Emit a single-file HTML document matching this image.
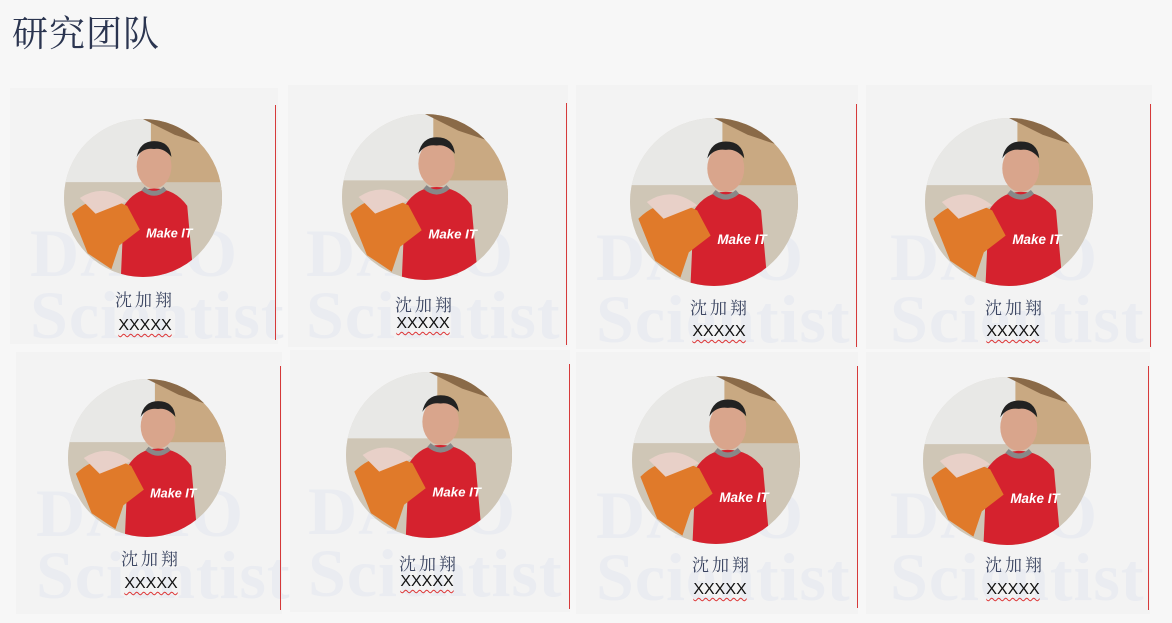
<!DOCTYPE html>
<html><head><meta charset="utf-8"><style>
body{margin:0;width:1172px;height:623px;background:#f7f7f7;position:relative;overflow:hidden;font-family:"Liberation Serif","Noto Serif CJK SC",serif}
.t{position:absolute;left:12px;top:6px;font-size:36px;color:#2b3550;letter-spacing:1px;font-family:"Noto Serif CJK SC",serif}
.card{position:absolute;background:#f3f3f3}
.wm{position:absolute;font-family:"Liberation Serif",serif;font-weight:bold;color:#eaecf1;font-size:68px;line-height:62px;white-space:nowrap;letter-spacing:1px}
.rl{position:absolute;width:1px;background:#d63a3a}
.nm{position:absolute;font-size:17px;color:#3a4460;letter-spacing:3px;transform:translateX(-50%);font-family:"Noto Serif CJK SC",serif;line-height:20px}
.xx{position:absolute;font-family:"Liberation Sans",sans-serif;font-size:16px;color:#111;transform:translateX(-50%);text-decoration:underline wavy #d33;text-underline-offset:3px;text-decoration-thickness:1px}
svg.p{position:absolute}
</style></head><body>
<div class="t">研究团队</div>
<svg width="0" height="0" style="position:absolute"><defs>
<clipPath id="c"><circle cx="50" cy="50" r="50"/></clipPath>
<g id="ph"><g clip-path="url(#c)">
<rect width="100" height="100" fill="#d9d3c8"/>
<rect x="0" y="0" width="60" height="40" fill="#e8e8e6"/>
<rect x="55" y="0" width="45" height="60" fill="#c9a982"/>
<polygon points="50,0 100,0 100,20 70,10" fill="#8a6a48"/>
<rect x="0" y="40" width="100" height="60" fill="#cfc6b6"/>
<ellipse cx="57" cy="30" rx="11" ry="14" fill="#d9a58c"/>
<path d="M46 24 Q48 14 57 14 Q67 14 68 24 Q63 18 57 19 Q50 18 46 24Z" fill="#222"/>
<path d="M36 100 L38 55 Q45 44 57 44 Q70 44 78 55 L82 100Z" fill="#d5222e"/>
<path d="M50 44 Q57 50 64 44" stroke="#888" stroke-width="3" fill="none"/>
<path d="M5 60 Q20 45 40 55 L48 70 L35 80 L30 95 L15 85 Z" fill="#e07a2a"/>
<path d="M10 50 Q25 40 40 52 L20 60Z" fill="#e8d0c8"/>
<text x="52" y="75" font-size="8" fill="#fff" font-family="Liberation Sans" font-style="italic" font-weight="bold">Make IT</text>
</g></g></defs></svg>
<div class="card" style="left:10px;top:88px;width:268px;height:256px"></div>
<div class="card" style="left:288px;top:85px;width:280px;height:262px"></div>
<div class="card" style="left:576px;top:85px;width:282px;height:264px"></div>
<div class="card" style="left:866px;top:85px;width:286px;height:264px"></div>
<div class="card" style="left:16px;top:352px;width:266px;height:262px"></div>
<div class="card" style="left:290px;top:350px;width:280px;height:262px"></div>
<div class="card" style="left:576px;top:352px;width:282px;height:262px"></div>
<div class="card" style="left:866px;top:352px;width:284px;height:262px"></div>
<div class="wm" style="left:30px;top:222px">DAHO<br>Scientist</div>
<div class="wm" style="left:306px;top:222px">DAHO<br>Scientist</div>
<div class="wm" style="left:596px;top:226px">DAHO<br>Scientist</div>
<div class="wm" style="left:890px;top:226px">DAHO<br>Scientist</div>
<div class="wm" style="left:36px;top:482px">DAHO<br>Scientist</div>
<div class="wm" style="left:308px;top:480px">DAHO<br>Scientist</div>
<div class="wm" style="left:596px;top:484px">DAHO<br>Scientist</div>
<div class="wm" style="left:890px;top:484px">DAHO<br>Scientist</div>
<div class="rl" style="left:275px;top:105px;height:235px"></div>
<div class="rl" style="left:566px;top:103px;height:242px"></div>
<div class="rl" style="left:856px;top:104px;height:243px"></div>
<div class="rl" style="left:1150px;top:104px;height:243px"></div>
<div class="rl" style="left:280px;top:366px;height:244px"></div>
<div class="rl" style="left:569px;top:364px;height:245px"></div>
<div class="rl" style="left:857px;top:366px;height:242px"></div>
<div class="rl" style="left:1148px;top:366px;height:244px"></div>
<svg class="p" style="left:64px;top:119px" width="158" height="158" viewBox="0 0 100 100"><use href="#ph"/></svg>
<svg class="p" style="left:342px;top:114px" width="166" height="166" viewBox="0 0 100 100"><use href="#ph"/></svg>
<svg class="p" style="left:630px;top:118px" width="168" height="168" viewBox="0 0 100 100"><use href="#ph"/></svg>
<svg class="p" style="left:925px;top:118px" width="168" height="168" viewBox="0 0 100 100"><use href="#ph"/></svg>
<svg class="p" style="left:68px;top:379px" width="158" height="158" viewBox="0 0 100 100"><use href="#ph"/></svg>
<svg class="p" style="left:346px;top:372px" width="166" height="166" viewBox="0 0 100 100"><use href="#ph"/></svg>
<svg class="p" style="left:632px;top:376px" width="168" height="168" viewBox="0 0 100 100"><use href="#ph"/></svg>
<svg class="p" style="left:923px;top:377px" width="168" height="168" viewBox="0 0 100 100"><use href="#ph"/></svg>
<div class="nm" style="left:145px;top:289px">沈加翔</div>
<div class="nm" style="left:425px;top:294px">沈加翔</div>
<div class="nm" style="left:720px;top:297px">沈加翔</div>
<div class="nm" style="left:1015px;top:297px">沈加翔</div>
<div class="nm" style="left:151px;top:548px">沈加翔</div>
<div class="nm" style="left:429px;top:553px">沈加翔</div>
<div class="nm" style="left:722px;top:554px">沈加翔</div>
<div class="nm" style="left:1015px;top:554px">沈加翔</div>
<div class="xx" style="left:145px;top:317px">XXXXX</div>
<div class="xx" style="left:423px;top:315px">XXXXX</div>
<div class="xx" style="left:719px;top:323px">XXXXX</div>
<div class="xx" style="left:1013px;top:323px">XXXXX</div>
<div class="xx" style="left:151px;top:575px">XXXXX</div>
<div class="xx" style="left:427px;top:573px">XXXXX</div>
<div class="xx" style="left:720px;top:581px">XXXXX</div>
<div class="xx" style="left:1013px;top:581px">XXXXX</div>
</body></html>
